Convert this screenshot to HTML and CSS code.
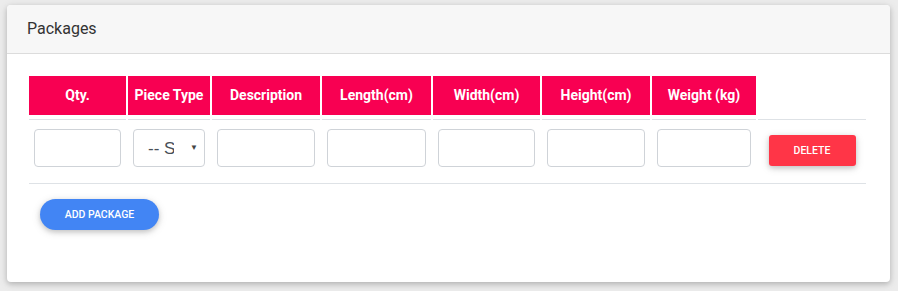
FILE: index.html
```html
<!DOCTYPE html>
<html lang="en">
<head>
    <meta charset="UTF-8">
    <title>Packages</title>
    <link rel="stylesheet" href="styles.css">
</head>
<body>

<div class="card">
    <div class="card-header">Packages</div>
    <div class="card-body">
        <div class="pkg-row pkg-head">
            <div class="head-cell"><div class="head-label">Qty.</div></div>
            <div class="head-cell"><div class="head-label">Piece Type</div></div>
            <div class="head-cell"><div class="head-label">Description</div></div>
            <div class="head-cell"><div class="head-label">Length(cm)</div></div>
            <div class="head-cell"><div class="head-label">Width(cm)</div></div>
            <div class="head-cell"><div class="head-label">Height(cm)</div></div>
            <div class="head-cell"><div class="head-label">Weight (kg)</div></div>
            <div class="head-cell"></div>
        </div>
        <div class="pkg-row pkg-body">
            <div class="cell"><input type="text" class="field"></div>
            <div class="cell">
                <div class="select-wrap">
                    <select class="field select">
                        <option>-- Select --</option>
                    </select>
                    <span class="caret">&#9660;</span>
                </div>
            </div>
            <div class="cell"><input type="text" class="field"></div>
            <div class="cell"><input type="text" class="field"></div>
            <div class="cell"><input type="text" class="field"></div>
            <div class="cell"><input type="text" class="field"></div>
            <div class="cell"><input type="text" class="field"></div>
            <div class="cell cell-action"><button class="btn btn-danger">Delete</button></div>
        </div>
        <button class="btn btn-primary">Add Package</button>
    </div>
</div>

</body>
</html>
```

FILE: styles.css
```css
body {
    margin: 0;
    padding: 5px 8px 9px 7px;
    background-color: #ececec;
    font-family: Roboto, "Liberation Sans", sans-serif;
}
.card {
    width: 883px;
    height: 277px;
    background-color: #fff;
    border-radius: 4px;
    box-shadow: 0 2px 5px 0 rgba(0, 0, 0, 0.16), 0 2px 10px 0 rgba(0, 0, 0, 0.12);
    overflow: hidden;
}
.card-header {
    height: 48px;
    line-height: 47px;
    padding: 0 20px;
    background-color: #f7f7f7;
    border-bottom: 1px solid #dcdcdc;
    font-size: 16px;
    color: #333;
}
.card-body {
    padding: 22px;
}
.pkg-row {
    display: grid;
    grid-template-columns: 97px 82px 108px 109px 107px 108px 104px 108px;
    column-gap: 2px;
    width: 837px;
}
.head-cell {
    padding-bottom: 4px;
    border-bottom: 1px solid #dee2e6;
}
.head-label {
    height: 39px;
    line-height: 39px;
    background-color: #f80052;
    color: #fff;
    font-size: 14px;
    font-weight: bold;
    text-align: center;
}
.pkg-body {
    padding: 9px 0 16px;
    border-bottom: 1px solid #dee2e6;
}
.cell {
    padding: 0 5px;
}
.field {
    display: block;
    width: 100%;
    height: 38px;
    box-sizing: border-box;
    border: 1px solid #cfd3d8;
    border-radius: 4px;
    background-color: #fff;
    font-size: 14px;
}
.select-wrap {
    position: relative;
}
.select {
    appearance: none;
    -webkit-appearance: none;
    padding: 0 30px 0 14px;
    font-family: "Liberation Sans", sans-serif;
    font-size: 17px;
    color: #495057;
    overflow: hidden;
}
.caret {
    position: absolute;
    right: 7px;
    top: 14px;
    font-size: 8px;
    color: #444;
}
.cell-action {
    display: flex;
    justify-content: center;
    align-items: flex-start;
}
.btn {
    height: 31px;
    border: none;
    color: #fff;
    font-family: Roboto, sans-serif;
    font-size: 10.5px;
    font-weight: 500;
    text-transform: uppercase;
    box-shadow: 0 2px 5px 0 rgba(0, 0, 0, 0.16), 0 2px 10px 0 rgba(0, 0, 0, 0.12);
}
.btn-danger {
    width: 87px;
    margin-top: 6px;
    border-radius: 3px;
    background-color: #ff3547;
}
.btn-primary {
    width: 119px;
    margin: 15px 0 0 11px;
    border-radius: 16px;
    background-color: #4285f4;
}
```
